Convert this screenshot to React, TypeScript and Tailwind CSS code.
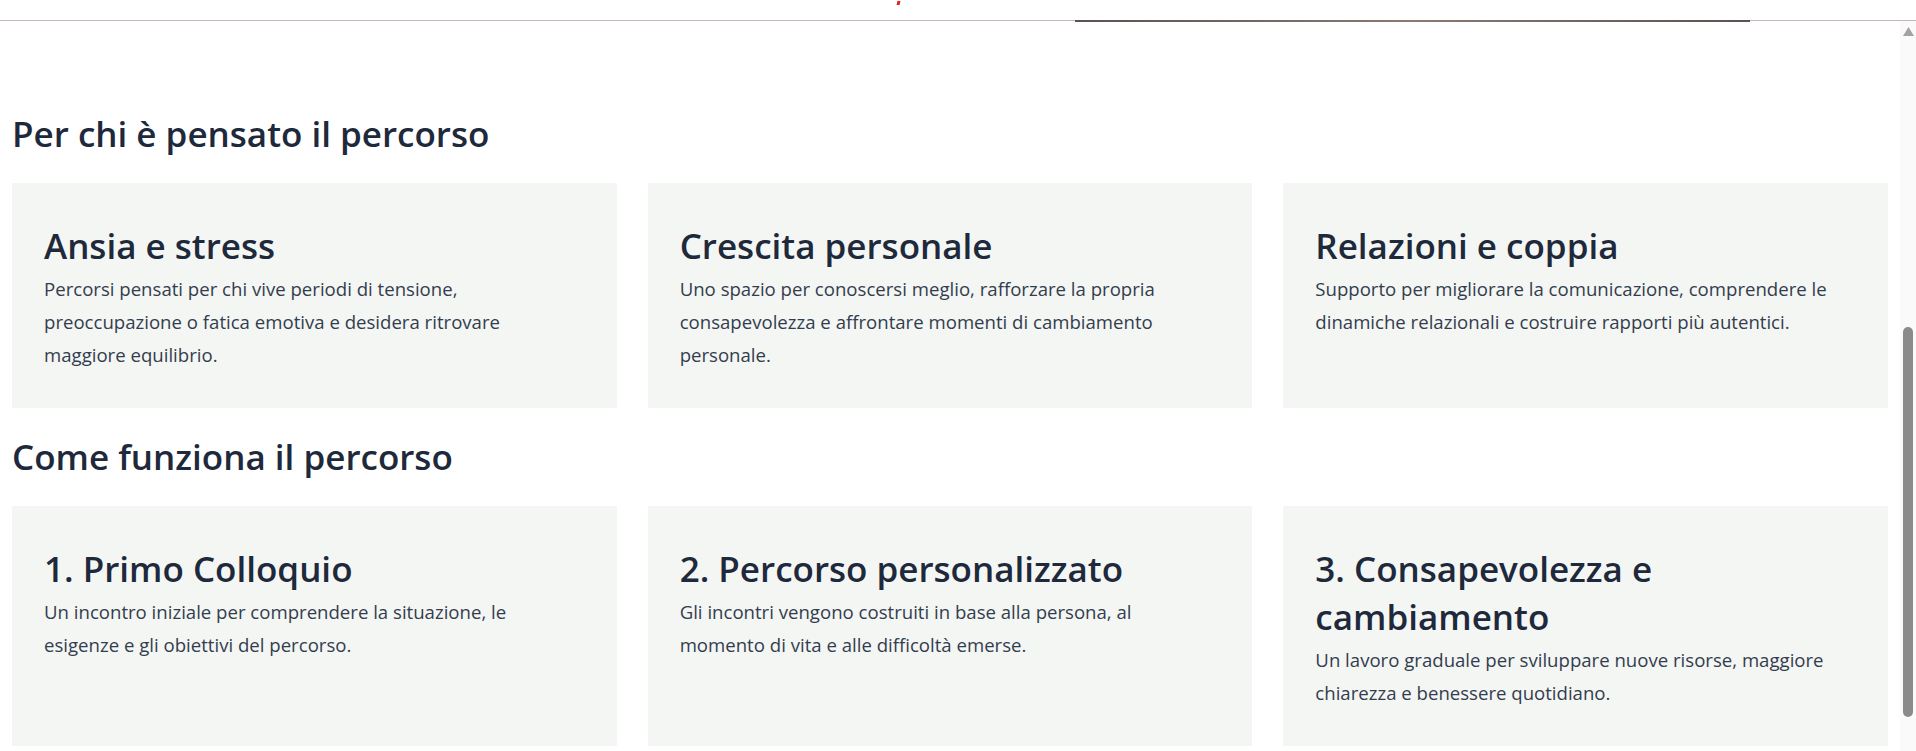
import React from "react";

type Item = {
  title: string;
  text: string;
};

const forWhom: Item[] = [
  {
    title: "Ansia e stress",
    text: "Percorsi pensati per chi vive periodi di tensione, preoccupazione o fatica emotiva e desidera ritrovare maggiore equilibrio.",
  },
  {
    title: "Crescita personale",
    text: "Uno spazio per conoscersi meglio, rafforzare la propria consapevolezza e affrontare momenti di cambiamento personale.",
  },
  {
    title: "Relazioni e coppia",
    text: "Supporto per migliorare la comunicazione, comprendere le dinamiche relazionali e costruire rapporti più autentici.",
  },
];

const steps: Item[] = [
  {
    title: "1. Primo Colloquio",
    text: "Un incontro iniziale per comprendere la situazione, le esigenze e gli obiettivi del percorso.",
  },
  {
    title: "2. Percorso personalizzato",
    text: "Gli incontri vengono costruiti in base alla persona, al momento di vita e alle difficoltà emerse.",
  },
  {
    title: "3. Consapevolezza e cambiamento",
    text: "Un lavoro graduale per sviluppare nuove risorse, maggiore chiarezza e benessere quotidiano.",
  },
];

function Card({ title, text }: Item) {
  return (
    <div className="bg-[#f4f6f4] px-8 pt-[39px] pb-[37px]">
      <h3 className="text-[35px] leading-[48px] font-semibold text-[#1e293b]">{title}</h3>
      <p className="mt-[2px] text-[18.6px] leading-[33px] text-[#333d4d]">{text}</p>
    </div>
  );
}

function Section({ heading, items, first }: { heading: string; items: Item[]; first?: boolean }) {
  return (
    <section>
      <h2
        className={`${first ? "mt-[89px]" : "mt-[25px]"} mb-[25px] text-[35px] leading-[48px] font-semibold text-[#1e293b]`}
      >
        {heading}
      </h2>
      <div className="grid grid-cols-3 gap-[31px]">
        {items.map((item) => (
          <Card key={item.title} {...item} />
        ))}
      </div>
    </section>
  );
}

function Scrollbar() {
  return (
    <div className="w-[16px] shrink-0 bg-[#fafafa] flex flex-col items-center pt-[6px]">
      <svg width="11" height="10" viewBox="0 0 11 10" className="fill-[#a3a3a3]">
        <path d="M5.5 0 L11 9 L0 9 Z" />
      </svg>
      <div className="mt-[290px] w-[10px] h-[390px] rounded-full bg-[#8b8b8b]" />
    </div>
  );
}

export default function App() {
  return (
    <div
      className="w-[1916px] h-[751px] overflow-hidden bg-white flex flex-col"
      style={{ fontFamily: '"Open Sans", "Noto Sans", sans-serif' }}
    >
      {/* bottom edge of the sticky header */}
      <div className="relative h-[20px] shrink-0">
        <span className="absolute left-[897px] top-[1px] w-[3px] h-[4px] bg-[#e5202a] -skew-x-12" />
      </div>
      <div className="relative h-px shrink-0 bg-[#c9b7b3]">
        <span className="absolute left-[1075px] top-0 w-[675px] h-[2px] bg-gradient-to-r from-[#5c524f] via-[#8a7b74] to-[#5c524f]" />
      </div>

      <div className="flex flex-1 min-h-0">
        <main className="flex-1 px-3">
          <Section heading="Per chi è pensato il percorso" items={forWhom} first />
          <Section heading="Come funziona il percorso" items={steps} />
        </main>
        <Scrollbar />
      </div>
    </div>
  );
}
